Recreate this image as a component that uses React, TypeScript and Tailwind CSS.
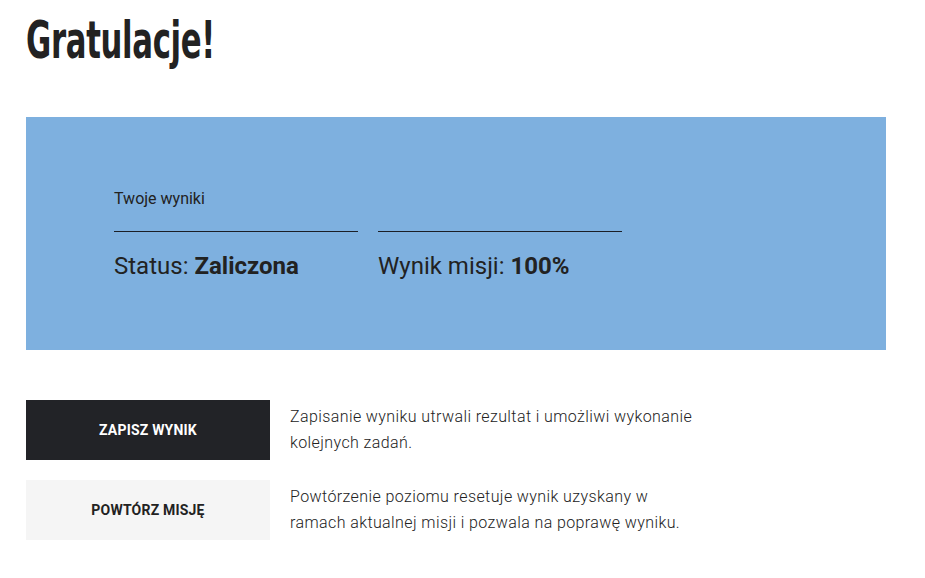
import React from "react";

export default function App() {
  const roboto = { fontFamily: "Roboto, 'Noto Sans', sans-serif" };
  return (
    <div className="w-[925px] h-[578px] bg-white overflow-hidden" style={roboto}>
      <div className="pl-[26px] pt-[13px] h-[117px]">
        <h1
          className="inline-block origin-left scale-x-[0.67] text-[51px] leading-[56px] font-bold text-[#222222] tracking-[-0.5px]"
          style={{ fontFamily: "'DejaVu Sans Condensed', 'DejaVu Sans', sans-serif", fontStretch: "condensed" }}
        >
          Gratulacje!
        </h1>
      </div>
      <div className="ml-[26px] w-[860px] h-[233px] bg-[#7eb0df] pl-[88px] pt-[72px]">
        <div className="text-[16px] leading-[20px] text-[#222222]">Twoje wyniki</div>
        <div className="flex gap-[20px] mt-[22px]">
          <div className="w-[244px]">
            <div className="h-px bg-[#1b1f27]" />
            <div className="mt-[19px] text-[24px] leading-[30px] text-[#222222] whitespace-nowrap">
              Status: <span className="font-bold">Zaliczona</span>
            </div>
          </div>
          <div className="w-[244px]">
            <div className="h-px bg-[#1b1f27]" />
            <div className="mt-[19px] text-[24px] leading-[30px] text-[#222222] whitespace-nowrap">
              Wynik misji: <span className="font-bold">100%</span>
            </div>
          </div>
        </div>
      </div>
      <div className="ml-[26px] mt-[50px] flex flex-col gap-[20px]">
        <div className="flex gap-[20px]">
          <button className="w-[244px] h-[60px] bg-[#222327] text-white text-[14px] font-bold tracking-[0.2px] shrink-0">
            ZAPISZ WYNIK
          </button>
          <p className="w-[412px] pt-[4px] text-[16px] leading-[26px] font-light tracking-[0.4px] text-[#222222]">
            Zapisanie wyniku utrwali rezultat i umożliwi wykonanie kolejnych zadań.
          </p>
        </div>
        <div className="flex gap-[20px]">
          <button className="w-[244px] h-[60px] bg-[#f5f5f5] text-[#222222] text-[14px] font-bold tracking-[0.2px] shrink-0">
            POWTÓRZ MISJĘ
          </button>
          <p className="w-[412px] pt-[4px] text-[16px] leading-[26px] font-light tracking-[0.4px] text-[#222222]">
            Powtórzenie poziomu resetuje wynik uzyskany w ramach aktualnej misji i pozwala na poprawę wyniku.
          </p>
        </div>
      </div>
    </div>
  );
}
